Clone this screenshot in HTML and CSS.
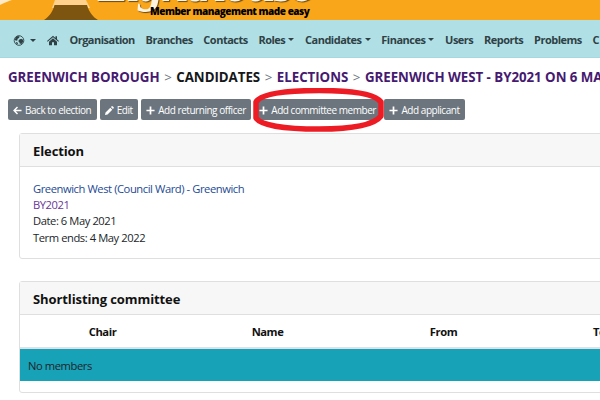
FILE: index.html
```html
<!DOCTYPE html>
<html lang="en">
<head>
    <meta charset="UTF-8">
    <meta name="viewport" content="width=device-width, initial-scale=1.0">
    <title>Greenwich West - BY2021 | Lighthouse</title>
    <link rel="stylesheet" href="styles.css">
</head>
<body>
    <header class="banner">
        <svg class="banner-art" width="110" height="20" viewBox="0 0 110 20">
            <path d="M0 0H12C8 1 4 3 0 5Z" fill="#fee9c8"/>
            <path d="M55 0H86L90 8H52Z" fill="#ffd18c"/>
            <path d="M54.500 5H87C89 12 93 17 98 20H44C50 16 53 11 54.500 5Z" fill="#7d5410"/>
        </svg>
        <div class="brand">Lighthouse</div>
        <div class="tagline">Member management made easy</div>
    </header>

    <nav class="navbar">
        <a class="nav-link dropdown" href="#">
            <svg class="globe" viewBox="0 0 16 16">
                <circle cx="8" cy="8" r="7" fill="none" stroke="currentColor" stroke-width="1.300"/>
                <path d="M3 3.500L6 1.500 9 2 8 4.500 6 5.500 5.500 8 3.500 8.500 2 7ZM8 7L11 5.500 14 7 14 10 11.500 13 9 12.500 8.500 10.500 7 9ZM3 10L6 11 6.500 13.500 4.500 13Z" fill="currentColor"/>
            </svg>
        </a>
        <a class="nav-link" href="#">
            <svg class="home" viewBox="0 0 18 16">
                <path d="M9 1L0 8.700 1 9.900 9 3.200 17 9.900 18 8.700 15 6.100V1.500H12.700V4.200ZM9 4.700L3 9.700V15H7.500V10.500H10.500V15H15V9.700Z" fill="currentColor"/>
            </svg>
        </a>
        <a class="nav-link" href="#">Organisation</a>
        <a class="nav-link" href="#">Branches</a>
        <a class="nav-link" href="#">Contacts</a>
        <a class="nav-link dropdown" href="#">Roles</a>
        <a class="nav-link dropdown" href="#">Candidates</a>
        <a class="nav-link dropdown" href="#">Finances</a>
        <a class="nav-link" href="#">Users</a>
        <a class="nav-link" href="#">Reports</a>
        <a class="nav-link" href="#">Problems</a>
        <a class="nav-link" href="#">C</a>
    </nav>

    <main class="page">
        <h1 class="breadcrumb">
            <a href="#">Greenwich Borough</a>
            <span class="sep">&gt;</span>
            <span>Candidates</span>
            <span class="sep">&gt;</span>
            <a href="#">Elections</a>
            <span class="sep">&gt;</span>
            <a href="#">Greenwich West - BY2021 on 6 May</a>
        </h1>

        <div class="toolbar">
            <a class="btn" href="#">
                <svg class="icon" viewBox="0 0 10 10"><path d="M9.500 5H1.500M5 1.200L1.200 5 5 8.800" fill="none" stroke="currentColor" stroke-width="1.600"/></svg>
                <span>Back to election</span>
            </a>
            <a class="btn" href="#">
                <svg class="icon" viewBox="0 0 10 10"><path d="M0 10L.6 7.200 5.900 1.900 8.100 4.100 2.800 9.400ZM6.600 1.200L7.400.4Q8 -.1 8.600.4L9.600 1.400Q10.100 2 9.600 2.600L8.800 3.400Z" fill="currentColor"/></svg>
                <span>Edit</span>
            </a>
            <a class="btn" href="#">
                <svg class="icon" viewBox="0 0 10 10"><path d="M5 .5V9.500M.5 5H9.500" stroke="currentColor" stroke-width="1.900"/></svg>
                <span>Add returning officer</span>
            </a>
            <a class="btn btn-marked" href="#">
                <svg class="icon" viewBox="0 0 10 10"><path d="M5 .5V9.500M.5 5H9.500" stroke="currentColor" stroke-width="1.900"/></svg>
                <span>Add committee member</span>
                <svg class="marker" viewBox="0 0 132 44">
                    <path d="M3 14C8 6 30 2.500 66 2.500S122 6 128 14V28C122 36 102 41 66 41S8 37 3 30Z" fill="none" stroke="#ed1c24" stroke-width="5.500" stroke-linejoin="round"/>
                </svg>
            </a>
            <a class="btn" href="#">
                <svg class="icon" viewBox="0 0 10 10"><path d="M5 .5V9.500M.5 5H9.500" stroke="currentColor" stroke-width="1.900"/></svg>
                <span>Add applicant</span>
            </a>
        </div>

        <section class="card">
            <h2 class="card-header">Election</h2>
            <div class="card-body">
                <a class="ward" href="#">Greenwich West (Council Ward) - Greenwich</a>
                <a class="visited" href="#">BY2021</a>
                <span>Date: 6 May 2021</span>
                <span>Term ends: 4 May 2022</span>
            </div>
        </section>

        <section class="card">
            <h2 class="card-header">Shortlisting committee</h2>
            <table class="table">
                <thead>
                    <tr>
                        <th class="col-chair">Chair</th>
                        <th class="col-name">Name</th>
                        <th class="col-from">From</th>
                        <th>To</th>
                    </tr>
                </thead>
                <tbody>
                    <tr><td colspan="4">No members</td></tr>
                </tbody>
            </table>
        </section>
    </main>
</body>
</html>
```
FILE: styles.css
```css
* {
    box-sizing: border-box;
}

body {
    margin: 0;
    height: 400px;
    overflow: hidden;
    background: #fff;
    color: #212529;
    font-family: "Open Sans", "Noto Sans", sans-serif;
    font-size: 11.2px;
    letter-spacing: -0.43px;
    line-height: 16.2px;
}

a {
    color: inherit;
    text-decoration: none;
}

.banner {
    position: relative;
    height: 20px;
    overflow: hidden;
    background: #faa61a;
}

.banner-art {
    display: block;
}

.brand {
    position: absolute;
    left: 98px;
    top: -42px;
    color: #fdf3df;
    font: italic bold 50px/52px "Liberation Serif", serif;
    letter-spacing: -2px;
    text-shadow: 1px 1px 1px #6b4a12;
}

.tagline {
    position: absolute;
    left: 150px;
    top: 4px;
    color: #000;
    font-size: 10px;
    font-weight: 800;
    letter-spacing: -0.48px;
    line-height: 15px;
    white-space: nowrap;
}

.navbar {
    display: flex;
    align-items: center;
    gap: 10.7px;
    height: 38px;
    padding: 3px 13px 0;
    background: #b0e0e6;
    border-bottom: 1px solid #a6d8df;
    color: #2f4145;
    white-space: nowrap;
}

.nav-link {
    display: flex;
    align-items: center;
    font-size: 11px;
    font-weight: 700;
    letter-spacing: -0.5px;
}

.dropdown::after {
    content: "";
    margin-left: 3px;
    border: 3px solid transparent;
    border-top-color: currentColor;
    border-bottom: 0;
}

.globe {
    width: 12px;
    height: 11px;
    margin-right: 2px;
}

.home {
    width: 12px;
    height: 11px;
}

.page {
    width: 800px;
    padding: 0 8px;
}

.breadcrumb {
    display: flex;
    gap: 4.6px;
    margin: 9px 0 12px;
    color: #151719;
    font-size: 13.3px;
    font-weight: 700;
    letter-spacing: -0.04px;
    line-height: 20px;
    text-transform: uppercase;
    white-space: nowrap;
}

.breadcrumb a {
    color: #461a70;
}

.breadcrumb .sep {
    color: #6c757d;
    font-weight: 400;
}

.toolbar {
    display: flex;
    gap: 3px;
    margin-bottom: 13px;
}

.btn {
    display: flex;
    align-items: center;
    gap: 3px;
    height: 21px;
    padding: 1px 5.5px 0 5px;
    border-radius: 2px;
    background: #6c757d;
    color: #fff;
    font-size: 10px;
    letter-spacing: -0.46px;
    white-space: nowrap;
}

.icon {
    width: 9px;
    height: 9px;
}

.btn-marked {
    position: relative;
}

.marker {
    position: absolute;
    left: -1px;
    top: -11px;
    width: 132px;
    height: 44px;
}

.card {
    margin: 0 12px 22px 11px;
    border: 1px solid #dfdfdf;
    border-radius: 3px;
}

.card-header {
    height: 33px;
    margin: 0;
    padding: 0 13px;
    background: #f7f7f7;
    border-bottom: 1px solid #dfdfdf;
    color: #111;
    font-size: 13px;
    font-weight: 700;
    letter-spacing: -0.1px;
    line-height: 34px;
}

.card-body {
    display: flex;
    flex-direction: column;
    padding: 14px 13px 12px;
}

.ward {
    color: #1d4a94;
}

.visited {
    color: #6b3595;
}

.table {
    width: 100%;
    margin-bottom: 11px;
    border-collapse: collapse;
    table-layout: fixed;
}

.table th {
    height: 33px;
    padding: 2px 0 0;
    border-bottom: 2px solid #dee2e6;
    color: #111;
    font-weight: 700;
}

.table .col-chair,
.table .col-name {
    width: 165px;
}

.table .col-from {
    width: 187px;
}

.table th:last-child {
    padding-left: 56px;
    text-align: left;
}

.table td {
    height: 33px;
    padding: 2px 8px 0;
    background: #17a2b8;
}
```
